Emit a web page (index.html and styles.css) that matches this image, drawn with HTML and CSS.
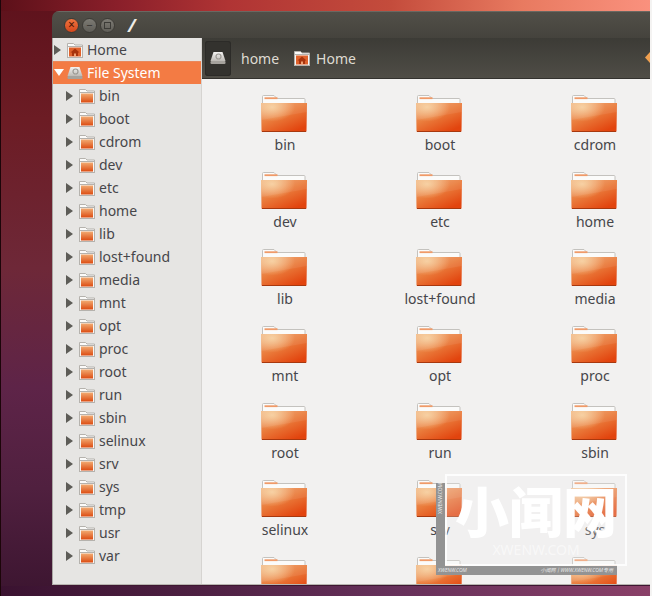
FILE: index.html
```html
<!DOCTYPE html>
<html lang="en">
<head>
<meta charset="utf-8">
<title>File System</title>
<link rel="stylesheet" href="styles.css">
</head>
<body>
<svg class="defs" width="0" height="0" aria-hidden="true">
  <defs>
    <linearGradient id="fg" x1="0" y1="0" x2=".7" y2="1">
      <stop offset="0" stop-color="#f0ad78"/>
      <stop offset=".5" stop-color="#ea7c3c"/>
      <stop offset="1" stop-color="#e2440e"/>
    </linearGradient>
    <linearGradient id="mg" x1="0" y1="0" x2="0" y2="1">
      <stop offset="0" stop-color="#f2ab72"/>
      <stop offset="1" stop-color="#dc4c12"/>
    </linearGradient>
    <radialGradient id="fh" cx=".24" cy=".14" r=".5">
      <stop offset="0" stop-color="#f8d4a4" stop-opacity=".9"/>
      <stop offset="1" stop-color="#f8d4a4" stop-opacity="0"/>
    </radialGradient>
    <linearGradient id="drive" x1="0" y1="0" x2="0" y2="1">
      <stop offset="0" stop-color="#f4f3f1"/>
      <stop offset="1" stop-color="#bdbab5"/>
    </linearGradient>
    <symbol id="folder" viewBox="0 0 46 38">
      <path d="M1.500 9V1.500a1 1 0 0 1 1-1h10.500l3 3h27a1 1 0 0 1 1 1V9z" fill="#fbfbfa" stroke="#c4c2be"/>
      <rect x="3.500" y="2.300" width="13" height="1.800" fill="#f09a68"/>
      <path d="M0 8h46l-.5 28a1 1 0 0 1-1 1H1.500a1 1 0 0 1-1-1z" fill="url(#fg)"/>
      <path d="M0 8h46l-.5 28a1 1 0 0 1-1 1H1.500a1 1 0 0 1-1-1z" fill="url(#fh)"/>
      <path d="M.5 25 45.800 17V8H0z" fill="#fff" opacity=".07"/>
      <path d="M1 36.500h44" stroke="#a8380e" stroke-width="1"/>
    </symbol>
    <symbol id="mini" viewBox="0 0 16 16">
      <path d="M.500 5V1.500h6l1.500 1.500h7.500V5" fill="#fbfbfa" stroke="#b5b2ad"/>
      <rect x=".500" y="4.500" width="15" height="11" fill="#f7f6f4" stroke="#b5b2ad"/>
      <rect x="2" y="5.500" width="12" height="9" fill="url(#mg)"/>
    </symbol>
    <symbol id="home" viewBox="0 0 16 16">
      <path d="M.500 5V1.500h6l1.500 1.500h7.500V5" fill="#fbfbfa" stroke="#b5b2ad"/>
      <rect x=".500" y="4.500" width="15" height="11" fill="#f7f6f4" stroke="#b5b2ad"/>
      <rect x="2" y="5.500" width="12" height="9" fill="#e0622c"/>
      <path d="M8 6.500 3.500 10.500H5V14h6v-3.500h1.500z" fill="#a8330c"/>
      <path d="M7 11.500h2V14H7z" fill="#f2a071"/>
    </symbol>
    <symbol id="disk" viewBox="0 0 16 14">
      <path d="M3.500 1h9L15.500 10H.500z" fill="url(#drive)"/>
      <rect x=".500" y="10" width="15" height="3" rx="1" fill="#a5a29d"/>
      <circle cx="8.500" cy="5.500" r="2.500" fill="none" stroke="#9c9994" stroke-width="1.200"/>
    </symbol>
  </defs>
</svg>

<main class="window">
  <header class="titlebar">
    <div class="controls">
      <span class="ctl ctl-close">×</span>
      <span class="ctl ctl-min">–</span>
      <span class="ctl ctl-max"><i class="sq"></i></span>
    </div>
    <span class="title">/</span>
  </header>
  <div class="panes">
    <nav class="sidebar">
      <div class="row top"><span class="arrow"></span><svg class="ico"><use href="#home"/></svg><span>Home</span></div>
      <div class="row top selected"><span class="arrow down"></span><svg class="ico"><use href="#disk"/></svg><span>File System</span></div>
      <div class="row"><span class="arrow"></span><svg class="ico"><use href="#mini"/></svg><span>bin</span></div>
      <div class="row"><span class="arrow"></span><svg class="ico"><use href="#mini"/></svg><span>boot</span></div>
      <div class="row"><span class="arrow"></span><svg class="ico"><use href="#mini"/></svg><span>cdrom</span></div>
      <div class="row"><span class="arrow"></span><svg class="ico"><use href="#mini"/></svg><span>dev</span></div>
      <div class="row"><span class="arrow"></span><svg class="ico"><use href="#mini"/></svg><span>etc</span></div>
      <div class="row"><span class="arrow"></span><svg class="ico"><use href="#mini"/></svg><span>home</span></div>
      <div class="row"><span class="arrow"></span><svg class="ico"><use href="#mini"/></svg><span>lib</span></div>
      <div class="row"><span class="arrow"></span><svg class="ico"><use href="#mini"/></svg><span>lost+found</span></div>
      <div class="row"><span class="arrow"></span><svg class="ico"><use href="#mini"/></svg><span>media</span></div>
      <div class="row"><span class="arrow"></span><svg class="ico"><use href="#mini"/></svg><span>mnt</span></div>
      <div class="row"><span class="arrow"></span><svg class="ico"><use href="#mini"/></svg><span>opt</span></div>
      <div class="row"><span class="arrow"></span><svg class="ico"><use href="#mini"/></svg><span>proc</span></div>
      <div class="row"><span class="arrow"></span><svg class="ico"><use href="#mini"/></svg><span>root</span></div>
      <div class="row"><span class="arrow"></span><svg class="ico"><use href="#mini"/></svg><span>run</span></div>
      <div class="row"><span class="arrow"></span><svg class="ico"><use href="#mini"/></svg><span>sbin</span></div>
      <div class="row"><span class="arrow"></span><svg class="ico"><use href="#mini"/></svg><span>selinux</span></div>
      <div class="row"><span class="arrow"></span><svg class="ico"><use href="#mini"/></svg><span>srv</span></div>
      <div class="row"><span class="arrow"></span><svg class="ico"><use href="#mini"/></svg><span>sys</span></div>
      <div class="row"><span class="arrow"></span><svg class="ico"><use href="#mini"/></svg><span>tmp</span></div>
      <div class="row"><span class="arrow"></span><svg class="ico"><use href="#mini"/></svg><span>usr</span></div>
      <div class="row"><span class="arrow"></span><svg class="ico"><use href="#mini"/></svg><span>var</span></div>
    </nav>
    <section class="main">
      <div class="pathbar">
        <span class="crumb-root"><svg class="ico-disk"><use href="#disk"/></svg></span>
        <span class="crumb">home</span>
        <span class="crumb"><svg class="ico"><use href="#home"/></svg>Home</span>
        <span class="more"></span>
      </div>
      <div class="grid">
        <div class="item"><svg class="folder"><use href="#folder"/></svg><span>bin</span></div>
        <div class="item"><svg class="folder"><use href="#folder"/></svg><span>boot</span></div>
        <div class="item"><svg class="folder"><use href="#folder"/></svg><span>cdrom</span></div>
        <div class="item"><svg class="folder"><use href="#folder"/></svg><span>dev</span></div>
        <div class="item"><svg class="folder"><use href="#folder"/></svg><span>etc</span></div>
        <div class="item"><svg class="folder"><use href="#folder"/></svg><span>home</span></div>
        <div class="item"><svg class="folder"><use href="#folder"/></svg><span>lib</span></div>
        <div class="item"><svg class="folder"><use href="#folder"/></svg><span>lost+found</span></div>
        <div class="item"><svg class="folder"><use href="#folder"/></svg><span>media</span></div>
        <div class="item"><svg class="folder"><use href="#folder"/></svg><span>mnt</span></div>
        <div class="item"><svg class="folder"><use href="#folder"/></svg><span>opt</span></div>
        <div class="item"><svg class="folder"><use href="#folder"/></svg><span>proc</span></div>
        <div class="item"><svg class="folder"><use href="#folder"/></svg><span>root</span></div>
        <div class="item"><svg class="folder"><use href="#folder"/></svg><span>run</span></div>
        <div class="item"><svg class="folder"><use href="#folder"/></svg><span>sbin</span></div>
        <div class="item"><svg class="folder"><use href="#folder"/></svg><span>selinux</span></div>
        <div class="item"><svg class="folder"><use href="#folder"/></svg><span>srv</span></div>
        <div class="item"><svg class="folder"><use href="#folder"/></svg><span>sys</span></div>
        <div class="item"><svg class="folder"><use href="#folder"/></svg></div>
        <div class="item"><svg class="folder"><use href="#folder"/></svg></div>
        <div class="item"><svg class="folder"><use href="#folder"/></svg></div>
      </div>
    </section>
  </div>
</main>

<aside class="watermark">
  <div class="wm-frame">
    <div class="wm-cn">小闻网</div>
    <div class="wm-en">XWENW.COM</div>
  </div>
  <div class="wm-side">XWENW.COM</div>
  <div class="wm-bar"><span>XWENW.COM</span><span>小闻网丨WWW.XWENW.COM专用</span></div>
</aside>
</body>
</html>
```
FILE: styles.css
```css
* { box-sizing: border-box; }
html, body { height: 100%; }
body {
  margin: 0;
  width: 652px;
  height: 596px;
  position: relative;
  overflow: hidden;
  padding: 11px 0 0 52px;
  font-family: "Noto Sans", "Open Sans", sans-serif;
  font-size: 14px;
  background:
    linear-gradient(#1c0509, #1c0509) left top/1px 100% no-repeat,
    linear-gradient(#f4f3f2, #f4f3f2) right top/2px 100% no-repeat,
    linear-gradient(90deg, #5c1019 0%, #8a1f2a 18%, #b03434 35%, #c44c3c 60%, #e87a60 80%, #fa917e 100%) top/100% 11px no-repeat,
    linear-gradient(90deg, #3a1230 0%, #4d2042 30%, #66305a 60%, #8a4068 100%) bottom/100% 10px no-repeat,
    linear-gradient(180deg, #5e121c 0%, #6c1c24 20%, #6e2838 45%, #5e2448 65%, #50203f 82%, #3c1530 100%);
}
.defs { position: absolute; }
.window {
  width: 598px;
  height: 574px;
  display: flex;
  flex-direction: column;
  border-radius: 7px 0 0 0;
  overflow: hidden;
  border-bottom: 1px solid #b8b5b0;
}
.titlebar {
  height: 27px;
  flex: none;
  display: flex;
  align-items: center;
  padding-left: 12px;
  background: linear-gradient(#514f48, #45433d);
  border-top: 1px solid #6a6862;
}
.controls { display: flex; gap: 3px; }
.ctl {
  width: 15px;
  height: 15px;
  border-radius: 50%;
  display: flex;
  align-items: center;
  justify-content: center;
  font-size: 12px;
  line-height: 1;
  color: #3c3b37;
  background: linear-gradient(#7d7b74, #5f5d57);
  border: 1px solid #3d3b36;
}
.ctl-close { background: linear-gradient(#f0743f, #d5471c); color: #4a1505; }
.sq { display: block; width: 7px; height: 7px; border: 1px solid #3c3b37; }
.title { margin-left: 13px; color: #eeece7; font-weight: 700; font-size: 18px; line-height: 20px; font-style: italic; }
.panes { flex: 1; display: flex; min-height: 0; }
.sidebar {
  width: 150px;
  flex: none;
  background: #e6e5e3;
  border-left: 1px solid #a9a7a3;
  border-right: 1px solid #d6d4d1;
  color: #46464a;
}
.row {
  height: 23px;
  display: flex;
  align-items: center;
  padding-left: 13px;
  white-space: nowrap;
}
.row .arrow { margin-right: 6px; }
.row .ico { margin-right: 4px; }
.row.top { padding-left: 1px; }
.selected { background: #f37b44; color: #fff; box-shadow: inset 0 1px 0 #e9875c; }
.arrow {
  width: 0;
  height: 0;
  flex: none;
  border-left: 7px solid #5d5c57;
  border-top: 5px solid transparent;
  border-bottom: 5px solid transparent;
}
.row .arrow.down {
  border-left: 5px solid transparent;
  border-right: 5px solid transparent;
  border-top: 7px solid #fff;
  border-bottom: 0;
  margin-right: 3px;
}
.ico { width: 16px; height: 16px; flex: none; }
.main { flex: 1; display: flex; flex-direction: column; min-width: 0; background: #f2f1f0; }
.pathbar {
  height: 41px;
  flex: none;
  display: flex;
  align-items: center;
  gap: 10px;
  padding-left: 3px;
  background: linear-gradient(#3c3b36, #4f4d46);
  border-bottom: 1px solid #33322e;
  color: #dfdbd2;
  position: relative;
}
.crumb-root {
  width: 26px;
  height: 35px;
  display: flex;
  align-items: center;
  justify-content: center;
  background: #33322e;
  border-radius: 3px;
  box-shadow: inset 0 0 0 1px #2c2b28;
}
.ico-disk { width: 16px; height: 14px; }
.crumb { display: flex; align-items: center; gap: 6px; }
.crumb + .crumb { margin-left: 5px; }
.more {
  position: absolute;
  right: 0;
  top: 14px;
  width: 5px;
  height: 11px;
  background: #f0a050;
  clip-path: polygon(100% 0, 100% 100%, 0 50%);
}
.grid {
  flex: 1;
  min-height: 0;
  overflow: hidden;
  display: grid;
  grid-template-columns: repeat(3, 110px);
  column-gap: 45px;
  grid-auto-rows: 77px;
  padding: 16px 0 0 28px;
}
.item {
  display: flex;
  flex-direction: column;
  align-items: center;
  color: #46464a;
  font-size: 14px;
  line-height: 20px;
}
.folder { width: 46px; height: 38px; margin: 0 2px 2px 0; display: block; flex: none; }
.watermark {
  position: absolute;
  left: 436px;
  top: 474px;
  width: 191px;
  height: 101px;
}
.wm-frame {
  position: absolute;
  left: 9px;
  top: 0;
  width: 182px;
  height: 92px;
  border: 2px solid rgba(255,255,255,.85);
  background: rgba(240,240,240,.25);
  text-align: center;
  color: #fff;
}
.wm-cn {
  font-family: "Noto Sans CJK SC", sans-serif;
  font-size: 54px;
  font-weight: 900;
  line-height: 56px;
  margin-top: 6px;
  white-space: nowrap;
}
.wm-en { font-size: 14px; color: rgba(255,255,255,.55); line-height: 15px; margin-top: 4px; }
.wm-side {
  position: absolute;
  left: 0;
  top: 9px;
  width: 9px;
  height: 92px;
  background: #939393;
  color: #e8e8e8;
  font-size: 5px;
  line-height: 9px;
  writing-mode: vertical-rl;
  transform: rotate(180deg);
  text-align: right;
  padding-top: 60px;
}
.wm-bar {
  position: absolute;
  left: 0;
  top: 92px;
  width: 181px;
  height: 9px;
  background: #939393;
  color: #e8e8e8;
  font-size: 5px;
  line-height: 9px;
  font-style: italic;
  font-family: "Noto Sans", "Noto Sans CJK SC", sans-serif;
  display: flex;
  justify-content: space-between;
  padding: 0 4px 0 2px;
}
```
